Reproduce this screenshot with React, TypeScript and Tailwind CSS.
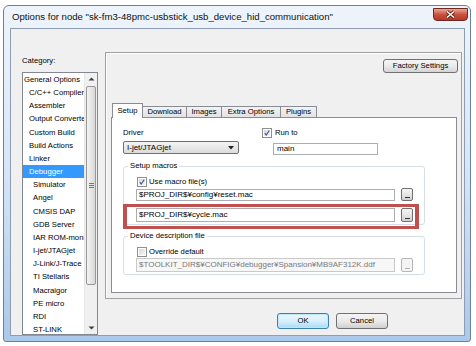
import React from "react";

const items: [string, number][] = [
  ["General Options", 0],
  ["C/C++ Compiler", 1],
  ["Assembler", 1],
  ["Output Converter", 1],
  ["Custom Build", 1],
  ["Build Actions", 1],
  ["Linker", 1],
  ["Debugger", 1],
  ["Simulator", 2],
  ["Angel", 2],
  ["CMSIS DAP", 2],
  ["GDB Server", 2],
  ["IAR ROM-monitor", 2],
  ["I-jet/JTAGjet", 2],
  ["J-Link/J-Trace", 2],
  ["TI Stellaris", 2],
  ["Macraigor", 2],
  ["PE micro", 2],
  ["RDI", 2],
  ["ST-LINK", 2],
];

function Check({ checked }: { checked?: boolean }) {
  return (
    <div className="w-[10px] h-[10px] shrink-0 border border-[#8e8f8f] bg-white p-[1px]">
      <div className="w-full h-full bg-gradient-to-br from-[#d6d6d6] to-[#f8f8f8] flex items-center justify-center">
        {checked && (
          <svg width="8" height="8" viewBox="0 0 8 8">
            <path d="M1 4.2 L3 6.6 L7 0.8" fill="none" stroke="#3d5a9c" strokeWidth="1.5" />
          </svg>
        )}
      </div>
    </div>
  );
}

function Browse({ disabled }: { disabled?: boolean }) {
  return (
    <div
      className={
        disabled
          ? "ml-[6px] w-[12px] h-full rounded-[2px] border border-[#b5b5b5] bg-[#f4f4f4] flex items-end justify-center pb-[2px]"
          : "ml-[6px] w-[12px] h-full rounded-[2px] border border-[#707070] bg-gradient-to-b from-[#f4f4f4] via-[#e6e6e6] to-[#cfcfcf] flex items-end justify-center pb-[2px]"
      }
    >
      <div className={disabled ? "w-[5px] h-[1px] bg-[#b0b0b0]" : "w-[5px] h-[1px] bg-[#333]"} />
    </div>
  );
}

export default function App() {
  return (
    <div className="w-[476px] h-[346px] bg-white overflow-hidden font-['Liberation_Sans',Arial,sans-serif] text-black">
      <div className="ml-[3px] mt-[5px] w-[468px] h-[337px] rounded-t-[6px] rounded-b-[3px] border border-[#6b809a] bg-gradient-to-b from-[#eef4fb] via-[#d6e5f6] to-[#aac8ea] flex flex-col">
        {/* title bar */}
        <div className="h-[22px] shrink-0 flex items-start justify-between pl-[8px] pr-[2px]">
          <span className="mt-[5px] text-[9.6px] leading-[11px] whitespace-nowrap text-[#111]">
            Options for node "sk-fm3-48pmc-usbstick_usb_device_hid_communication"
          </span>
          <div className="mt-[2px] w-[35px] h-[13px] rounded-b-[4px] border border-[#6e2a21] bg-gradient-to-b from-[#e9a796] via-[#c9513e] to-[#b33a28] flex items-center justify-center">
            <svg width="11" height="9" viewBox="0 0 11 9">
              <path d="M2 1.5 L9 7.5 M9 1.5 L2 7.5" stroke="#5a1c14" strokeWidth="3" />
              <path d="M2 1.5 L9 7.5 M9 1.5 L2 7.5" stroke="#fff" strokeWidth="1.6" />
            </svg>
          </div>
        </div>

        {/* client area */}
        <div className="ml-[6px] mr-[5px] mb-[5px] flex-1 border border-[#8d9db3] bg-[#f0f0f0] flex overflow-hidden text-[7.7px]">
          {/* left column */}
          <div className="ml-[11px] w-[76px] flex flex-col shrink-0">
            <div className="mt-[27px] h-[10px] leading-[10px]">Category:</div>
            <div className="mt-[6px] h-[263px] border border-[#828790] bg-white flex overflow-hidden">
              <div className="flex-1 min-w-0 flex flex-col">
                {items.map(([t, lvl]) => (
                  <div
                    key={t}
                    className={
                      (t === "Debugger" ? "bg-[#3399ff] text-white " : "") +
                      (lvl === 0 ? "pl-[1px] " : lvl === 1 ? "pl-[6px] " : "pl-[10px] ") +
                      "h-[13.16px] leading-[13.16px] whitespace-nowrap overflow-hidden shrink-0"
                    }
                  >
                    {t}
                  </div>
                ))}
              </div>
              <div className="w-[13px] shrink-0 flex flex-col bg-[#f0f0f0] border-l border-[#e6e6e6]">
                <div className="h-[12px] flex items-center justify-center">
                  <svg width="7" height="4" viewBox="0 0 7 4">
                    <path d="M0.5 3.5 L3.5 0.5 L6.5 3.5 Z" fill="#404040" />
                  </svg>
                </div>
                <div className="mt-[1px] mx-[1px] h-[199px] rounded-[2px] border border-[#979797] bg-gradient-to-r from-[#f3f3f3] to-[#d9d9d9] flex items-center justify-center">
                  <div className="flex flex-col gap-[1px]">
                    <div className="w-[5px] h-[1px] bg-[#777]" />
                    <div className="w-[5px] h-[1px] bg-[#777]" />
                    <div className="w-[5px] h-[1px] bg-[#777]" />
                  </div>
                </div>
                <div className="flex-1" />
                <div className="h-[12px] flex items-center justify-center">
                  <svg width="7" height="4" viewBox="0 0 7 4">
                    <path d="M0.5 0.5 L3.5 3.5 L6.5 0.5 Z" fill="#404040" />
                  </svg>
                </div>
              </div>
            </div>
          </div>

          {/* right column */}
          <div className="ml-[7px] w-[357px] flex flex-col shrink-0">
            <div className="mt-[23px] h-[247px] border border-[#a0a0a0] shadow-[inset_1px_1px_0_#ffffff] flex flex-col">
              <div className="flex justify-end pt-[6px] pr-[3px]">
                <div className="w-[75px] h-[14px] rounded-[3px] border border-[#707070] bg-gradient-to-b from-[#f4f4f4] via-[#ebebeb] to-[#d4d4d4] flex items-center justify-center">
                  Factory Settings
                </div>
              </div>
              {/* tabs */}
              <div className="mt-[30px] ml-[5px] h-[14px] flex items-end pl-[1px]">
                <div className="relative z-10 -mb-px w-[31px] h-[15px] border border-b-0 border-[#898c95] bg-white flex items-center justify-center pb-[1px]">
                  Setup
                </div>
                <div className="w-[44px] h-[11px] border border-l-0 border-b-0 border-[#898c95] bg-gradient-to-b from-[#f3f3f3] to-[#e2e2e2] flex items-center justify-center">
                  Download
                </div>
                <div className="w-[35px] h-[11px] border border-l-0 border-b-0 border-[#898c95] bg-gradient-to-b from-[#f3f3f3] to-[#e2e2e2] flex items-center justify-center">
                  Images
                </div>
                <div className="w-[59px] h-[11px] border border-l-0 border-b-0 border-[#898c95] bg-gradient-to-b from-[#f3f3f3] to-[#e2e2e2] flex items-center justify-center">
                  Extra Options
                </div>
                <div className="w-[36px] h-[11px] border border-l-0 border-b-0 border-[#898c95] bg-gradient-to-b from-[#f3f3f3] to-[#e2e2e2] flex items-center justify-center">
                  Plugins
                </div>
              </div>
              {/* tab pane */}
              <div className="ml-[5px] w-[346px] h-[176px] border border-[#898c95] bg-white flex flex-col">
                <div className="flex pl-[11px] pt-[10px]">
                  <div className="w-[116px] flex flex-col">
                    <div className="h-[10px] leading-[10px]">Driver</div>
                    <div className="mt-[3px] h-[13px] rounded-[2px] border border-[#707070] bg-gradient-to-b from-[#f4f4f4] to-[#dcdcdc] flex items-center justify-between pl-[3px] pr-[4px]">
                      <span className="text-[8px]">I-jet/JTAGjet</span>
                      <svg width="6" height="4" viewBox="0 0 6 4">
                        <path d="M0 0 L6 0 L3 3.5 Z" fill="#222" />
                      </svg>
                    </div>
                  </div>
                  <div className="ml-[23px] flex flex-col">
                    <div className="h-[10px] flex items-center gap-[3px]">
                      <Check checked />
                      <span className="leading-[10px]">Run to</span>
                    </div>
                    <div className="mt-[5px] ml-[11px] w-[105px] h-[12px] border border-[#abadb3] bg-white flex items-center pl-[3px] text-[8px]">
                      main
                    </div>
                  </div>
                </div>

                {/* setup macros group */}
                <div className="relative ml-[11px] mt-[11px] w-[302px] border border-[#d5dfe5] rounded-[3px] flex flex-col pb-[2px]">
                  <div className="-mt-[6px] ml-[4px] px-[2px] w-fit bg-white h-[10px] leading-[10px]">Setup macros</div>
                  <div className="mt-[6px] ml-[13px] h-[10px] flex items-center gap-[2px]">
                    <Check checked />
                    <span className="leading-[10px]">Use macro file(s)</span>
                  </div>
                  <div className="mt-[1px] ml-[12px] h-[13px] flex">
                    <div className="w-[259px] h-[12px] mt-[1px] border border-[#abadb3] bg-white flex items-center pl-[2px] text-[8px] whitespace-nowrap">
                      $PROJ_DIR$¥config¥reset.mac
                    </div>
                    <Browse />
                  </div>
                  <div className="mt-[7px] ml-[12px] h-[14px] flex">
                    <div className="w-[259px] h-[14px] border border-[#abadb3] bg-white flex items-center pl-[2px] text-[8px] whitespace-nowrap">
                      $PROJ_DIR$¥cycle.mac
                    </div>
                    <Browse />
                  </div>
                  <div className="absolute left-[-1px] top-[37px] w-[296px] h-[25px] border-x-[4px] border-y-[3px] border-[#c0504d] pointer-events-none" />
                </div>

                {/* device description group */}
                <div className="ml-[11px] mt-[11px] w-[302px] border border-[#d5dfe5] rounded-[3px] flex flex-col pb-[2px]">
                  <div className="-mt-[6px] ml-[4px] px-[2px] w-fit bg-white h-[10px] leading-[10px]">Device description file</div>
                  <div className="mt-[6px] ml-[13px] h-[10px] flex items-center gap-[2px]">
                    <Check />
                    <span className="leading-[10px]">Override default</span>
                  </div>
                  <div className="mt-[1px] ml-[12px] h-[14px] flex">
                    <div className="w-[259px] h-[14px] border border-[#c9c9c9] bg-[#f7f7f7] flex items-center pl-[2px] text-[8px] text-[#7a7a7a] whitespace-nowrap overflow-hidden">
                      $TOOLKIT_DIR$¥CONFIG¥debugger¥Spansion¥MB9AF312K.ddf
                    </div>
                    <Browse disabled />
                  </div>
                </div>
              </div>
            </div>

            {/* buttons */}
            <div className="mt-[14px] flex justify-end gap-[7px] pr-[74px]">
              <div className="w-[52px] h-[16px] rounded-[3px] border border-[#3c7fb1] bg-gradient-to-b from-[#eaf6fd] via-[#d9f0fc] to-[#a7d9f5] shadow-[inset_0_0_0_1px_#bfe6fb] flex items-center justify-center">
                OK
              </div>
              <div className="w-[52px] h-[16px] rounded-[3px] border border-[#707070] bg-gradient-to-b from-[#f4f4f4] via-[#ebebeb] to-[#d0d0d0] flex items-center justify-center">
                Cancel
              </div>
            </div>
          </div>
        </div>
      </div>
    </div>
  );
}
